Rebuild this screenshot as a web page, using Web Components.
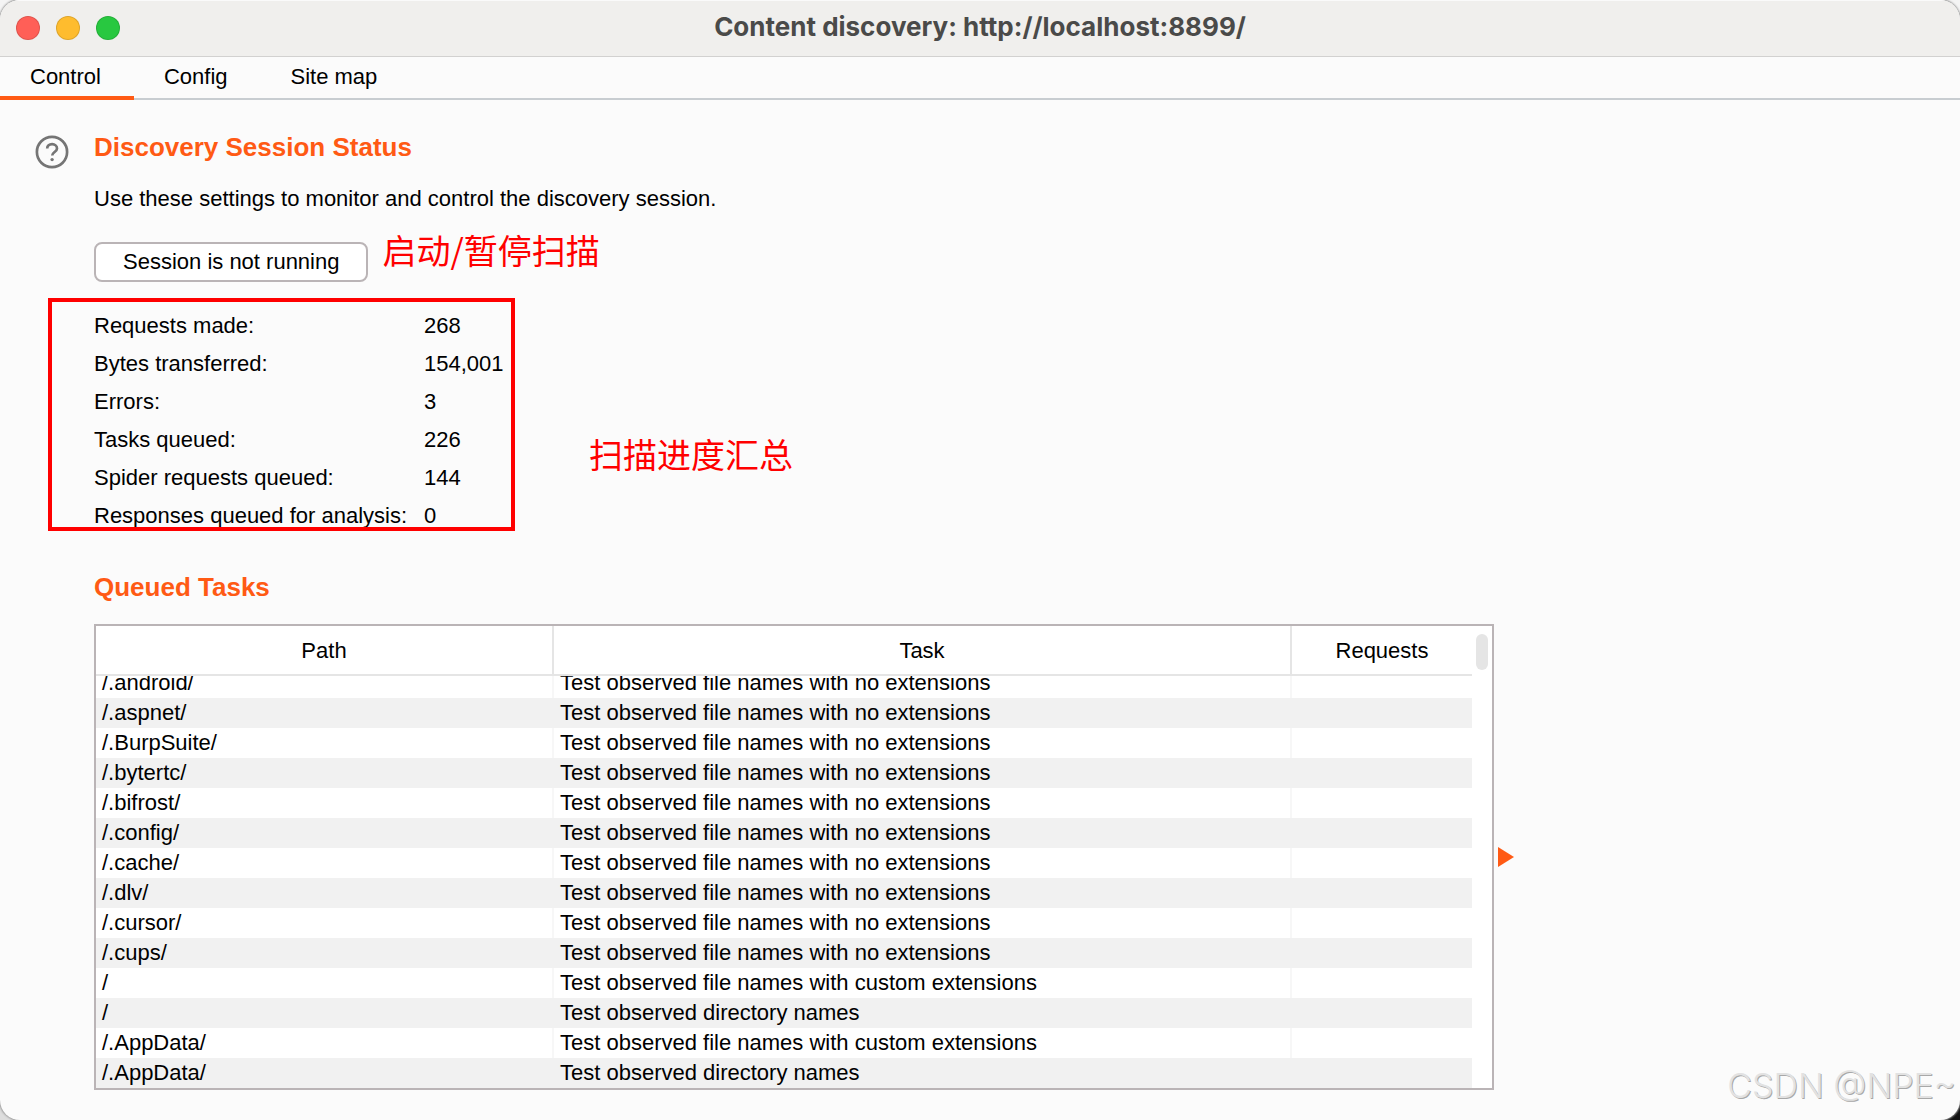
<!DOCTYPE html>
<html lang="en">
<head>
<meta charset="utf-8">
<title>Content discovery: http://localhost:8899/</title>
<style>
  html, body {
    height: 100%;
    margin: 0;
  }
  body {
    --accent: #ff5a14;
    --line: #bab4b6;
    --note: #ff0000;
    overflow: hidden;
    font: 22px/30px "Liberation Sans", "Noto Sans CJK SC", sans-serif;
    color: #000;
    background:
      linear-gradient(#111, #111) right bottom / 24px 24px no-repeat,
      linear-gradient(#ddd, #ddd) left bottom / 24px 24px no-repeat,
      #f4f4f4;
  }
</style>
</head>
<body>
<app-window heading="Content discovery: http://localhost:8899/">
  <tab-strip slot="tabs" tabs="Control,Config,Site map"></tab-strip>
  <settings-section heading="Discovery Session Status" help>
    <p>Use these settings to monitor and control the discovery session.</p>
    <session-toggle note="启动/暂停扫描">Session is not running</session-toggle>
    <session-stats note="扫描进度汇总"></session-stats>
  </settings-section>
  <settings-section heading="Queued Tasks">
    <task-table></task-table>
  </settings-section>
</app-window>
<water-mark>CSDN @NPE~</water-mark>

<script>
// HELPER

function attach(element, markup) {
  const shadow = element.attachShadow({ mode: "open" });
  shadow.innerHTML = markup.trim();
  return shadow;
}

// DATA

const STATS = [
  ["Requests made:", "268"],
  ["Bytes transferred:", "154,001"],
  ["Errors:", "3"],
  ["Tasks queued:", "226"],
  ["Spider requests queued:", "144"],
  ["Responses queued for analysis:", "0"],
];

const NO_EXT = "Test observed file names with no extensions";
const CUSTOM_EXT = "Test observed file names with custom extensions";
const DIRS = "Test observed directory names";

const TASKS = [
  ["/.android/", NO_EXT],
  ["/.aspnet/", NO_EXT],
  ["/.BurpSuite/", NO_EXT],
  ["/.bytertc/", NO_EXT],
  ["/.bifrost/", NO_EXT],
  ["/.config/", NO_EXT],
  ["/.cache/", NO_EXT],
  ["/.dlv/", NO_EXT],
  ["/.cursor/", NO_EXT],
  ["/.cups/", NO_EXT],
  ["/", CUSTOM_EXT],
  ["/", DIRS],
  ["/.AppData/", CUSTOM_EXT],
  ["/.AppData/", DIRS],
];

// WINDOW

class AppWindow extends HTMLElement {
  constructor() {
    super();
    attach(this, `
      <style>
        :host {
          display: flex;
          flex-direction: column;
          box-sizing: border-box;
          min-height: 100%;
          border-radius: 20px;
          overflow: hidden;
          background: #fbfbfb;
          box-shadow: 0 0 2px 1px #999;
        }
        header {
          display: grid;
          grid-template-columns: 1fr auto 1fr;
          align-items: center;
          height: 56px;
          padding: 0 16px;
          background: #f0efed;
          border-bottom: 1px solid #d2d1d0;
          box-shadow: inset 0 1px #fafafa;
        }
        .lights {
          display: flex;
          gap: 16px;
        }
        .lights button {
          width: 24px;
          height: 24px;
          padding: 0;
          border: 1px solid #00000020;
          border-radius: 50%;
        }
        .close { background: #ff5f57; }
        .minimize { background: #febc2e; }
        .zoom { background: #28c840; }
        h1 {
          margin: 0;
          padding-bottom: 2px;
          font: bold 26px/32px Inter, sans-serif;
          color: #4a4a49;
        }
        main {
          display: flex;
          flex-direction: column;
          gap: 37px;
          padding: 32px 0 28px 32px;
        }
      </style>
      <header>
        <div class="lights">
          <button class="close" aria-label="Close"></button>
          <button class="minimize" aria-label="Minimize"></button>
          <button class="zoom" aria-label="Zoom"></button>
        </div>
        <h1></h1>
      </header>
      <slot name="tabs"></slot>
      <main><slot></slot></main>
    `);
  }
  connectedCallback() {
    this.shadowRoot.querySelector("h1").textContent = this.getAttribute("heading");
  }
}

// TABS

class TabStrip extends HTMLElement {
  constructor() {
    super();
    attach(this, `
      <style>
        :host {
          display: flex;
          height: 43px;
          box-shadow: inset 0 -2px #c8cdd1;
        }
        button {
          padding: 0 33px 0 30px;
          border: 0;
          border-bottom: 4px solid transparent;
          background: none;
          color: inherit;
          font: inherit;
        }
        [aria-selected="true"] { border-color: var(--accent); }
      </style>
    `);
  }
  connectedCallback() {
    this.setAttribute("role", "tablist");
    this.getAttribute("tabs").split(",").forEach((name, i) => {
      const $tab = document.createElement("button");
      $tab.setAttribute("role", "tab");
      $tab.setAttribute("aria-selected", i === 0);
      $tab.textContent = name;
      $tab.addEventListener("click", () => this.select($tab));
      this.shadowRoot.append($tab);
    });
  }
  select($selected) {
    this.shadowRoot.querySelectorAll("button").forEach(($tab) => {
      $tab.setAttribute("aria-selected", $tab === $selected);
    });
  }
}

// SECTION

class SettingsSection extends HTMLElement {
  constructor() {
    super();
    attach(this, `
      <style>
        :host {
          display: grid;
          grid-template-columns: 62px 1fr;
        }
        :host(:not([help])) .help { visibility: hidden; }
        .help {
          width: 40px;
          height: 40px;
          padding: 0;
          border: 0;
          background: none;
        }
        svg { display: block; }
        h2 {
          margin: 0 0 22px;
          font: bold 26px/30px "Liberation Sans", sans-serif;
          color: var(--accent);
        }
        ::slotted(p) { margin: 0 0 28px; }
      </style>
      <button class="help" aria-label="Help">
        <svg width="40" height="40" viewBox="0 0 40 40" fill="none" stroke="#757575" stroke-width="2.7">
          <circle cx="20" cy="20" r="15.1"/>
          <path d="M15.2 16.6c0-2.7 2.1-4.4 4.9-4.4s4.9 1.8 4.9 4.2c0 3.4-4.8 3.7-4.8 7.1"/>
          <circle cx="20.1" cy="27.6" r="1.7" fill="#757575" stroke="none"/>
        </svg>
      </button>
      <div>
        <h2></h2>
        <slot></slot>
      </div>
    `);
  }
  connectedCallback() {
    this.shadowRoot.querySelector("h2").textContent = this.getAttribute("heading");
  }
}

class SessionToggle extends HTMLElement {
  constructor() {
    super();
    attach(this, `
      <style>
        :host {
          display: flex;
          gap: 14px;
        }
        button {
          height: 40px;
          padding: 0 27px;
          border: 2px solid var(--line);
          border-radius: 8px;
          background: #fff;
          color: inherit;
          font: inherit;
        }
        .note {
          margin-top: -12px;
          font: 34px/40px "Noto Sans CJK SC", sans-serif;
          color: var(--note);
        }
      </style>
      <button><slot></slot></button>
      <span class="note"></span>
    `);
  }
  connectedCallback() {
    this.shadowRoot.querySelector(".note").textContent = this.getAttribute("note");
  }
}

class SessionStats extends HTMLElement {
  constructor() {
    super();
    attach(this, `
      <style>
        :host {
          display: flex;
          align-items: center;
          gap: 74px;
          padding-top: 25px;
        }
        .box { position: relative; }
        /* marker frame, drawn over the figures */
        .frame {
          position: absolute;
          inset: -9px 0 4px -46px;
          border: 4px solid var(--note);
        }
        dl {
          display: grid;
          grid-template-columns: 330px 91px;
          grid-auto-rows: 38px;
          align-items: center;
          margin: 0;
        }
        dd { margin: 0; }
        .note {
          padding-top: 66px;
          font: 34px/40px "Noto Sans CJK SC", sans-serif;
          color: var(--note);
        }
      </style>
      <div class="box">
        <dl>${STATS.map(([name, value]) => `<dt>${name}</dt><dd>${value}</dd>`).join("")}</dl>
        <div class="frame"></div>
      </div>
      <span class="note"></span>
    `);
  }
  connectedCallback() {
    this.shadowRoot.querySelector(".note").textContent = this.getAttribute("note");
  }
}

// TABLE

class TaskTable extends HTMLElement {
  constructor() {
    super();
    attach(this, `
      <style>
        :host {
          display: flex;
          align-items: center;
          gap: 4px;
          padding-right: 446px;
        }
        .box {
          display: flex;
          flex: 1;
          border: 2px solid var(--line);
          background: #fff;
        }
        .scroll {
          flex: 1;
          height: 462px;
          overflow: auto;
          scrollbar-width: none;
        }
        .bar {
          width: 12px;
          padding: 8px 4px 0;
        }
        .thumb {
          height: 36px;
          border-radius: 6px;
          background: #e5e5e5;
        }
        table {
          width: 100%;
          table-layout: fixed;
          border-spacing: 0;
        }
        th, td {
          box-sizing: border-box;
          padding: 0 6px;
          text-align: left;
          white-space: nowrap;
          border-right: 2px solid #f7f7f7;
        }
        th {
          position: sticky;
          top: 0;
          height: 50px;
          padding-top: 2px;
          font-weight: normal;
          text-align: center;
          background: #fff;
          border-right-color: #e5e5e5;
          border-bottom: 2px solid #e5e5e5;
        }
        td { height: 30px; }
        th:last-child, td:last-child { border-right: 0; }
        tr:nth-child(even) td {
          background: #f1f1f1;
          border-color: #f1f1f1;
        }
        .path { width: 458px; }
        .requests { width: 180px; }
        .expand {
          width: 16px;
          height: 20px;
          padding: 0;
          border: 0;
          background: var(--accent);
          clip-path: polygon(0 0, 100% 50%, 0 100%);
        }
      </style>
      <div class="box">
        <div class="scroll">
          <table>
            <thead>
              <tr><th class="path">Path</th><th>Task</th><th class="requests">Requests</th></tr>
            </thead>
            <tbody>
              ${TASKS.map(([path, task]) => `<tr><td>${path}</td><td>${task}</td><td></td></tr>`).join("")}
            </tbody>
          </table>
        </div>
        <div class="bar"><div class="thumb"></div></div>
      </div>
      <button class="expand" aria-label="Expand"></button>
    `);
  }
  connectedCallback() {
    const $scroll = this.shadowRoot.querySelector(".scroll");
    $scroll.scrollTop = $scroll.scrollHeight;
  }
}

// WATERMARK

class WaterMark extends HTMLElement {
  constructor() {
    super();
    attach(this, `
      <style>
        :host {
          position: absolute;
          right: 4px;
          bottom: 10px;
          font: 300 34px/48px Inter, sans-serif;
          color: #e2e2e2;
          text-shadow: 1px 1px #a8a8a8;
          pointer-events: none;
        }
      </style>
      <slot></slot>
    `);
  }
}

customElements.define("app-window", AppWindow);
customElements.define("tab-strip", TabStrip);
customElements.define("settings-section", SettingsSection);
customElements.define("session-toggle", SessionToggle);
customElements.define("session-stats", SessionStats);
customElements.define("task-table", TaskTable);
customElements.define("water-mark", WaterMark);
</script>
</body>
</html>
